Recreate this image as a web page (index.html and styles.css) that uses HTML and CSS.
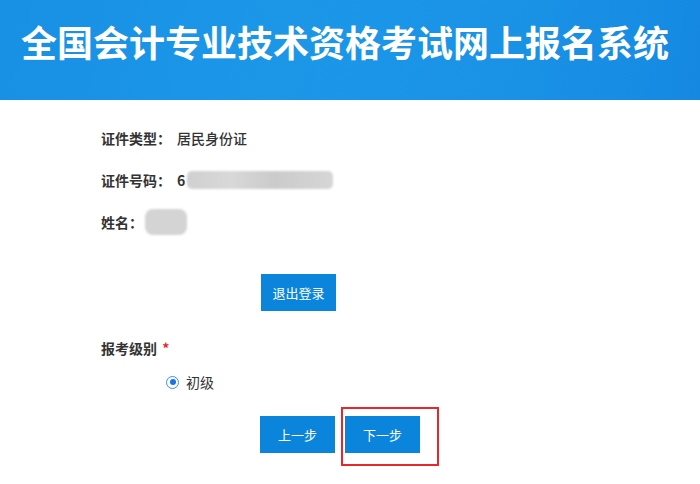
FILE: index.html
```html
<!DOCTYPE html>
<html lang="zh-CN">
<head>
<meta charset="utf-8">
<title>全国会计专业技术资格考试网上报名系统</title>
<link rel="stylesheet" href="styles.css">
</head>
<body>
<header class="banner">
  <h1 class="banner-title">全国会计专业技术资格考试网上报名系统</h1>
</header>
<main class="content">
  <section class="info">
    <div class="info-row"><span class="label">证件类型：</span><span class="value">居民身份证</span></div>
    <div class="info-row"><span class="label">证件号码：</span><span class="value strong">6</span><span class="mask mask-id"></span></div>
    <div class="info-row"><span class="label">姓名：</span><span class="mask mask-name"></span></div>
  </section>
  <div class="logout-wrap"><button class="btn">退出登录</button></div>
  <div class="field-title">报考级别 <span class="req">*</span></div>
  <label class="radio-row"><span class="radio"><span class="radio-dot"></span></span><span class="radio-text">初级</span></label>
  <div class="actions">
    <button class="btn">上一步</button>
    <div class="highlight-wrap">
      <button class="btn">下一步</button>
      <span class="highlight"></span>
    </div>
  </div>
</main>
</body>
</html>
```

FILE: styles.css
```css
* { box-sizing: border-box; }
html, body { min-height: 484px; }
body {
  margin: 0;
  background: #fff;
  font-family: "Noto Sans CJK SC", "Noto Sans", sans-serif;
  color: #333;
}
.banner {
  height: 100px;
  background: linear-gradient(100deg, #1890e4 0%, #1c97e8 40%, #1a93e6 70%, #1589e2 100%);
  display: flex;
  justify-content: center;
  padding: 19px 10px 0 0;
}
.banner-title {
  margin: 0;
  color: #fff;
  font-size: 36px;
  line-height: 44px;
  font-weight: 700;
  letter-spacing: 0;
}
.content {
  padding: 17px 0 40px 101px;
}
.info-row {
  height: 42px;
  line-height: 42px;
  font-size: 14px;
  display: flex;
  align-items: center;
}
.label { font-weight: 700; color: #333; margin-right: 6px; }
.value { color: #333; font-weight: 500; }
.strong { font-weight: 700; }
.mask {
  display: inline-block;
  background: #cfcfcf;
  filter: blur(1px);
}
.mask-id { width: 146px; height: 18px; margin-left: 2px; border-radius: 5px; background: linear-gradient(90deg, #d0d0d0, #d8d8d8 30%, #cbcbcb 60%, #d6d6d6); }
.mask-name { width: 42px; height: 26px; margin-left: -4px; border-radius: 8px; background: #d4d4d4; }
.logout-wrap { padding: 31px 0 0 160px; }
.btn {
  width: 75px;
  height: 37px;
  border: none;
  background: #0b85dc;
  color: #fff;
  font-family: "Noto Sans CJK SC", sans-serif;
  font-size: 13px;
  padding: 0;
  display: block;
}
.field-title {
  margin-top: 27px;
  font-size: 14px;
  font-weight: 700;
  line-height: 20px;
}
.req { color: #e5262b; margin-left: 2px; }
.radio-row {
  display: flex;
  align-items: center;
  gap: 7px;
  margin: 14px 0 0 65px;
  font-size: 14px;
  line-height: 20px;
}
.radio {
  width: 13px;
  height: 13px;
  border-radius: 50%;
  border: 1.5px solid #3b8ff0;
  display: flex;
  align-items: center;
  justify-content: center;
}
.radio-dot { width: 6px; height: 6px; border-radius: 50%; background: #1a73e8; }
.actions {
  display: flex;
  gap: 10px;
  margin: 24px 0 0 159px;
}
.highlight-wrap { position: relative; }
.highlight {
  position: absolute;
  left: -4px;
  top: -9px;
  width: 98px;
  height: 59px;
  border: 2px solid #e8262b;
  pointer-events: none;
}
```
